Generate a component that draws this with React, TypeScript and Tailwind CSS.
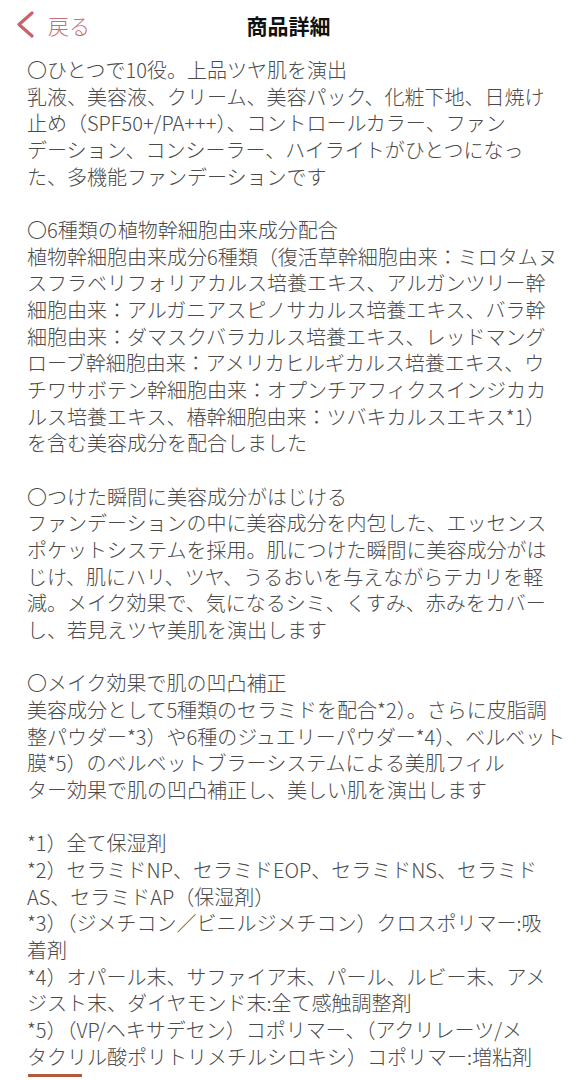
import React from "react";

const sections: string[][] = [
  [
    "〇ひとつで10役。上品ツヤ肌を演出",
    "乳液、美容液、クリーム、美容パック、化粧下地、日焼け",
    "止め（SPF50+/PA+++）、コントロールカラー、ファン",
    "デーション、コンシーラー、ハイライトがひとつになっ",
    "た、多機能ファンデーションです",
  ],
  [
    "〇6種類の植物幹細胞由来成分配合",
    "植物幹細胞由来成分6種類（復活草幹細胞由来：ミロタムヌ",
    "スフラベリフォリアカルス培養エキス、アルガンツリー幹",
    "細胞由来：アルガニアスピノサカルス培養エキス、バラ幹",
    "細胞由来：ダマスクバラカルス培養エキス、レッドマング",
    "ローブ幹細胞由来：アメリカヒルギカルス培養エキス、ウ",
    "チワサボテン幹細胞由来：オプンチアフィクスインジカカ",
    "ルス培養エキス、椿幹細胞由来：ツバキカルスエキス*1）",
    "を含む美容成分を配合しました",
  ],
  [
    "〇つけた瞬間に美容成分がはじける",
    "ファンデーションの中に美容成分を内包した、エッセンス",
    "ポケットシステムを採用。肌につけた瞬間に美容成分がは",
    "じけ、肌にハリ、ツヤ、うるおいを与えながらテカリを軽",
    "減。メイク効果で、気になるシミ、くすみ、赤みをカバー",
    "し、若見えツヤ美肌を演出します",
  ],
  [
    "〇メイク効果で肌の凹凸補正",
    "美容成分として5種類のセラミドを配合*2）。さらに皮脂調",
    "整パウダー*3）や6種のジュエリーパウダー*4）、ベルベット",
    "膜*5）のベルベットブラーシステムによる美肌フィル",
    "ター効果で肌の凹凸補正し、美しい肌を演出します",
  ],
  [
    "*1）全て保湿剤",
    "*2）セラミドNP、セラミドEOP、セラミドNS、セラミド",
    "AS、セラミドAP（保湿剤）",
    "*3）（ジメチコン／ビニルジメチコン）クロスポリマー:吸",
    "着剤",
    "*4）オパール末、サファイア末、パール、ルビー末、アメ",
    "ジスト末、ダイヤモンド末:全て感触調整剤",
    "*5）（VP/ヘキサデセン）コポリマー、（アクリレーツ/メ",
  ],
];

export default function App() {
  return (
    <div
      className="w-[585px] h-[1080px] overflow-hidden bg-white"
      style={{ fontFamily: '"Noto Sans CJK JP", "Noto Sans", sans-serif' }}
    >
      <header className="relative h-[50px] flex items-center justify-center">
        <div className="absolute left-[16px] top-0 h-[50px] flex items-center gap-[12px]">
          <svg width="20" height="28" viewBox="0 0 20 28" className="mt-[-1px]">
            <polyline
              points="16,2 3,13.5 16,25"
              fill="none"
              stroke="#c9626b"
              strokeWidth="3.2"
              strokeLinecap="round"
              strokeLinejoin="round"
            />
          </svg>
          <span className="text-[21px] font-light leading-none text-[#c96d75]">戻る</span>
        </div>
        <h1 className="text-[21px] font-bold leading-none text-[#111111] ml-[-8px]">商品詳細</h1>
      </header>
      <main className="pl-[27px] pt-[7px] text-[20px] font-light leading-[26.67px] text-[#4a4a4a] whitespace-nowrap flex flex-col gap-[26.67px]">
        {sections.map((lines, i) => (
          <div key={i}>
            {lines.map((l, j) => (
              <div key={j}>{l}</div>
            ))}
            {i === sections.length - 1 && (
              <div className="relative">
                タクリル酸ポリトリメチルシロキシ）コポリマー:増粘剤
                <span className="absolute left-[1px] top-[30px] h-[3px] w-[54px] bg-[#b35a3c]" />
              </div>
            )}
          </div>
        ))}
      </main>
    </div>
  );
}
